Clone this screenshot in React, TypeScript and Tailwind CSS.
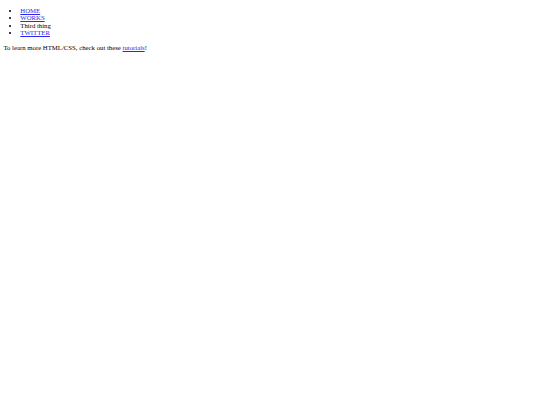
export default function App() {
  const links = [
    { label: "HOME", href: "#" },
    { label: "WORKS", href: "#" },
    { label: "Third thing" },
    { label: "TWITTER", href: "#" },
  ];

  return (
    <div className="min-h-[405px] bg-white px-[3.4px] pt-[6.5px] font-['Liberation_Serif',serif] text-[6.75px] leading-[7.65px] text-black">
      <ul className="list-disc pl-[16.9px]">
        {links.map(l => (
          <li key={l.label}>
            {l.href ? (
              <a href={l.href} className="text-[#2a2aee] underline">
                {l.label}
              </a>
            ) : (
              l.label
            )}
          </li>
        ))}
      </ul>
      <p className="mt-[6.5px]">
        To learn more HTML/CSS, check out these{" "}
        <a href="#" className="text-[#2a2aee] underline">
          tutorials
        </a>
        !
      </p>
    </div>
  );
}
